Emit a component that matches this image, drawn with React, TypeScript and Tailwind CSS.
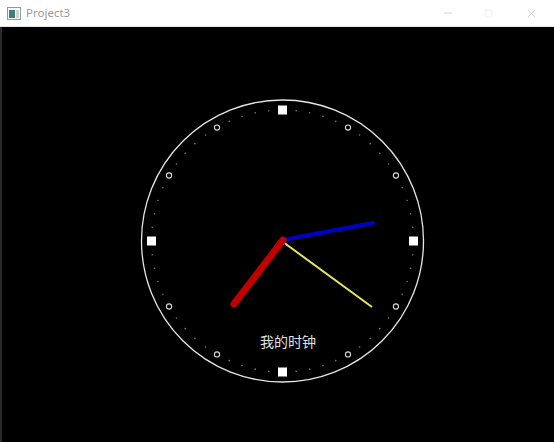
import { Minus, Square, X } from 'lucide-react'

const CX = 282.5
const CY = 241
const R_FACE = 141
const R_MARK = 131

function polar(deg: number, r: number) {
  const a = ((deg - 90) * Math.PI) / 180
  return { x: CX + r * Math.cos(a), y: CY + r * Math.sin(a) }
}

function ClockFace() {
  const marks = Array.from({ length: 60 }, (_, i) => i)
  return (
    <svg width={552} height={415} viewBox="2 27 552 415" className="block">
      <circle cx={CX} cy={CY} r={R_FACE} fill="none" stroke="#e6e6e6" strokeWidth={1.3} />
      {marks.map((i) => {
        const p = polar(i * 6, R_MARK)
        if (i % 15 === 0) {
          return <rect key={i} x={p.x - 4.5} y={p.y - 4.5} width={9} height={9} fill="#ffffff" />
        }
        if (i % 5 === 0) {
          return <circle key={i} cx={p.x} cy={p.y} r={2.6} fill="none" stroke="#d8d8d8" strokeWidth={1.1} />
        }
        return <circle key={i} cx={p.x} cy={p.y} r={0.8} fill="#7a7a7a" />
      })}
      <text
        x={288}
        y={347}
        textAnchor="middle"
        fontSize={14}
        fill="#e0e0e0"
        style={{ fontFamily: '"Noto Sans CJK SC", "Noto Sans", sans-serif' }}
      >
        我的时钟
      </text>
      <line x1={283} y1={242} x2={372} y2={307} stroke="#e6e65c" strokeWidth={2} />
      <line x1={283} y1={240} x2={373} y2={223} stroke="#0000c8" strokeWidth={4} strokeLinecap="round" />
      <line x1={283} y1={240} x2={234} y2={304} stroke="#c00000" strokeWidth={7} strokeLinecap="round" />
    </svg>
  )
}

export default function App() {
  return (
    <div className="w-[554px] h-[442px] flex flex-col bg-black overflow-hidden" style={{ fontFamily: '"Segoe UI", "Noto Sans", sans-serif' }}>
      <div className="h-[27px] shrink-0 bg-white flex items-center pl-[7px] border-b border-[#e4e4e4]">
        <svg width={14} height={13} viewBox="0 0 14 13" className="mr-[5px]">
          <rect x={0.5} y={0.5} width={13} height={12} fill="#ffffff" stroke="#8a9aa0" />
          <rect x={2} y={3} width={6} height={8} fill="#3f7f7c" />
          <rect x={9} y={3} width={3} height={8} fill="#c9d6d8" />
        </svg>
        <span className="text-[11.5px] text-[#9a9a9a] leading-none">Project3</span>
        <div className="ml-auto flex items-center h-full">
          <div className="w-[40px] h-full flex items-center justify-center text-[#b0b0b0]">
            <Minus size={12} strokeWidth={1.2} />
          </div>
          <div className="w-[40px] h-full flex items-center justify-center text-[#e0e0e0]">
            <Square size={9} strokeWidth={1.2} />
          </div>
          <div className="w-[46px] h-full flex items-center justify-center text-[#b0b0b0]">
            <X size={13} strokeWidth={1.1} />
          </div>
        </div>
      </div>
      <div className="flex-1 border-l-2 border-[#2a2a2a]">
        <ClockFace />
      </div>
    </div>
  )
}
